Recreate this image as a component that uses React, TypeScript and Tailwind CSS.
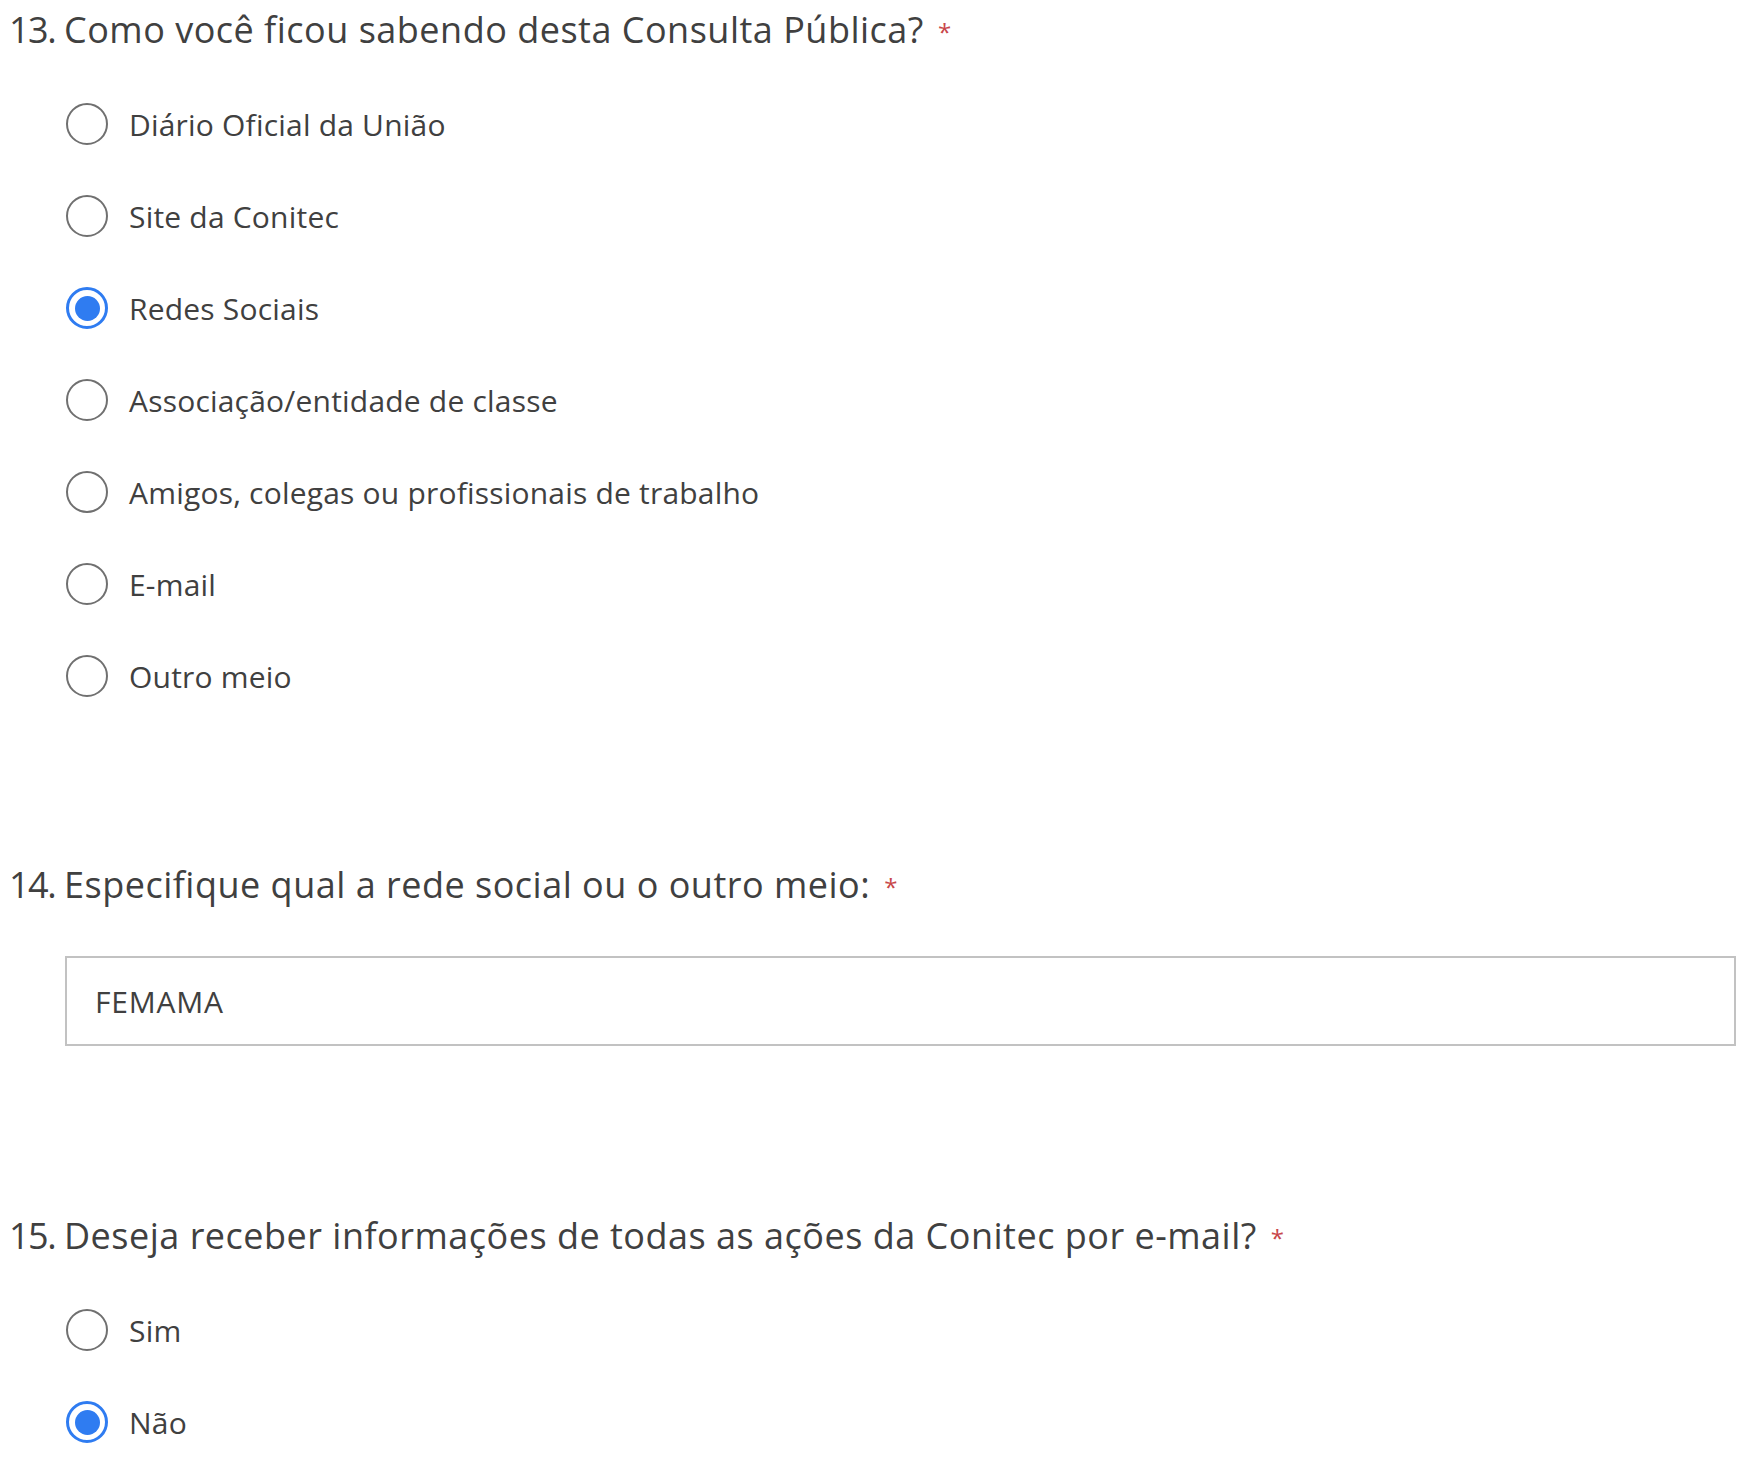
import React from 'react'

const font = { fontFamily: '"Open Sans", "Noto Sans", sans-serif' }

const q13 = [
  'Diário Oficial da União',
  'Site da Conitec',
  'Redes Sociais',
  'Associação/entidade de classe',
  'Amigos, colegas ou profissionais de trabalho',
  'E-mail',
  'Outro meio',
]

const Title = ({ n, text }: { n: number; text: string }) => (
  <div className="flex items-baseline text-[36px] leading-[48px] text-[#404040]">
    <span className="pl-[9px] w-[64px] tracking-[-1.5px]">{n}.</span>
    <span className="tracking-[0.5px]">{text}</span>
    <span className="ml-[14px] text-[24px] text-[#c8474a] self-start leading-[40px] pt-[6px]">*</span>
  </div>
)

const Radio = ({ label, checked }: { label: string; checked?: boolean }) => (
  <label className="flex items-center h-[92px] pl-[66px] cursor-pointer">
    {checked ? (
      <span className="w-[42px] h-[42px] rounded-full border-[3px] border-[#2f7cf1] flex items-center justify-center shrink-0">
        <span className="w-[25px] h-[25px] rounded-full bg-[#2f7cf1]" />
      </span>
    ) : (
      <span className="w-[42px] h-[42px] rounded-full border-2 border-[#707070] shrink-0" />
    )}
    <span className="ml-[21px] text-[30px] tracking-[0.2px] text-[#404040]">{label}</span>
  </label>
)

export default function App() {
  return (
    <div className="min-h-screen bg-white pt-[6px] pr-[22px]" style={font}>
      <Title n={13} text="Como você ficou sabendo desta Consulta Pública?" />
      <div className="mt-[24px]">
        {q13.map((o) => (
          <Radio key={o} label={o} checked={o === 'Redes Sociais'} />
        ))}
      </div>

      <div className="mt-[139px]">
        <Title n={14} text="Especifique qual a rede social ou o outro meio:" />
      </div>
      <div className="mt-[47px] mb-[-2px] ml-[65px] h-[90px] border-2 border-[#c2c2c2] flex items-center px-[28px] text-[30px] tracking-[0.8px] text-[#404040]">
        FEMAMA
      </div>

      <div className="mt-[168px]">
        <Title n={15} text="Deseja receber informações de todas as ações da Conitec por e-mail?" />
      </div>
      <div className="mt-[24px]">
        <Radio label="Sim" />
        <Radio label="Não" checked />
      </div>
    </div>
  )
}
